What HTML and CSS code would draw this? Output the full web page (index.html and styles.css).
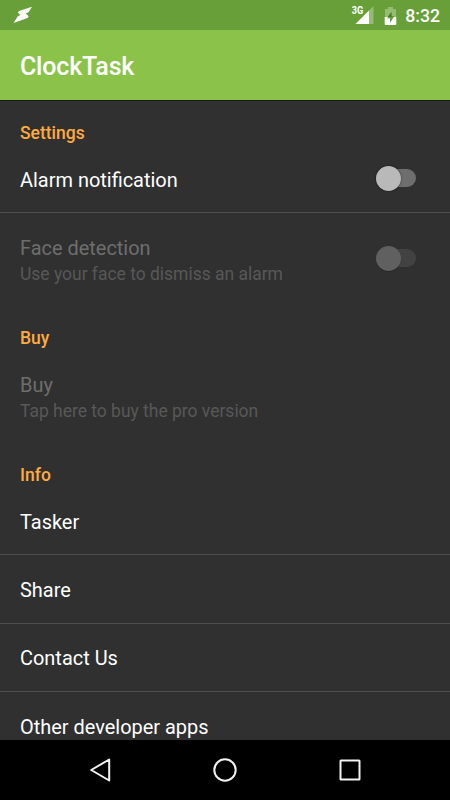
FILE: index.html
```html
<!DOCTYPE html>
<html lang="en">
<head>
<meta charset="utf-8">
<title>ClockTask</title>
<link rel="stylesheet" href="styles.css">
</head>
<body>
<div class="screen">
  <div class="status">
    <svg class="bolt" width="20" height="18" viewBox="0 0 20 18"><path d="M19 .7L6 5Q4.200 6 5.500 7.200L7.600 9 4.800 10.200.5 17 14.500 12Q16.500 11 15 9.600L12.700 7.500 15.500 6.300z" fill="#fff"/></svg>
    <svg class="signal" width="24" height="20" viewBox="0 0 24 20"><path d="M22.500 1v18H4.500z" fill="#fff" fill-opacity=".3"/><path d="M18 5.500V19H4.500z" fill="#fff"/><text x=".7" y="9" class="net" textLength="11.500" lengthAdjust="spacingAndGlyphs">3G</text></svg>
    <svg class="battery" width="13" height="19" viewBox="0 0 13 19"><path d="M4 1h5v2h3v8H1V3h3z" fill="#fff" fill-opacity=".3"/><path d="M.7 11h11.600v7q0 .9-.9.9H1.600Q.7 18.900.7 18z" fill="#fff"/><path d="M7.500 6L3 12.200h3v4.500l4.200-6.200H7.500z" fill="#689f38"/><path d="M7.500 6L3.700 11h6.100l.4-.5H7.500z" fill="#4c7b28"/></svg>
    <span class="time">8:32</span>
  </div>
  <header class="appbar"><h1>ClockTask</h1></header>
  <main class="list">
    <h2>Settings</h2>
    <div class="row ruled first"><span class="label">Alarm notification</span><span class="switch"><i class="thumb"></i></span></div>
    <div class="row double off"><div><div class="label">Face detection</div><div class="summary">Use your face to dismiss an alarm</div></div><span class="switch"><i class="thumb"></i></span></div>
    <h2>Buy</h2>
    <div class="row double off"><div><div class="label">Buy</div><div class="summary">Tap here to buy the pro version</div></div></div>
    <h2>Info</h2>
    <div class="row ruled first"><span class="label">Tasker</span></div>
    <div class="row ruled tall"><span class="label">Share</span></div>
    <div class="row ruled"><span class="label">Contact Us</span></div>
    <div class="row last"><span class="label">Other developer apps</span></div>
  </main>
  <nav class="nav">
    <svg width="26" height="26" viewBox="0 0 26 26"><path d="M22.200 2.500v21L4.200 13z"/></svg>
    <svg width="26" height="26" viewBox="0 0 26 26"><circle cx="13" cy="13" r="10.700"/></svg>
    <svg width="26" height="26" viewBox="0 0 26 26"><rect x="3.500" y="3.500" width="19" height="19" rx=".5"/></svg>
  </nav>
</div>
</body>
</html>
```
FILE: styles.css
```css
* { box-sizing: border-box; }
body { margin: 0; background: #303030; font-family: Roboto, sans-serif; }
.screen { width: 450px; height: 800px; display: flex; flex-direction: column; overflow: hidden; }
.status { flex: none; height: 30px; background: #689f38; display: flex; align-items: center; padding: 0 10px 0 13px; }
.bolt { margin-right: auto; }
.signal { margin-right: 9px; }
.net { font: 700 10.5px Roboto, sans-serif; fill: #fff; }
.battery { margin-right: 8px; }
.time { font-size: 17.7px; font-weight: 500; color: #fff; line-height: 30px; padding-top: 1px; }
.appbar { flex: none; height: 70px; background: #8bc34a; display: flex; align-items: center; padding: 4px 20px 0; }
h1 { margin: 0; font-size: 25px; font-weight: 500; color: #fff; line-height: 30px; letter-spacing: -.2px; }
.list { flex: 1; min-height: 0; overflow: hidden; background: #303030; box-shadow: inset 0 1px 0 #18181f; }
h2 { margin: 0; height: 45px; padding: 23px 20px 0; font-size: 17.5px; line-height: 21px; font-weight: 500; color: #ffab40; }
.row { height: 67px; padding: 0 34px 0 20px; display: flex; align-items: center; justify-content: space-between; }
.ruled { height: 68px; border-bottom: 1px solid #4d4d4d; padding-top: 1px; }
.first { padding-top: 3px; }
.tall { height: 69px; padding-top: 2px; }
.last { padding-top: 3px; }
.double { height: 92px; padding-top: 2px; }
.label { font-size: 19.95px; line-height: 24px; color: #fff; }
.summary { font-size: 17.5px; line-height: 21px; padding-top: 4px; height: 25px; letter-spacing: -.02px; }
.off .label { color: #6e6e6e; }
.off .summary { color: #585858; }
.switch { width: 40px; height: 18px; margin-bottom: 4px; border-radius: 9px; background: #6e6e6e; display: flex; align-items: center; }
.thumb { width: 25px; height: 25px; flex: none; border-radius: 50%; background: #b9b9b9; box-shadow: 0 0 2px rgba(0,0,0,.7); }
.off .switch { background: #424242; }
.off .thumb { background: #606060; box-shadow: 0 1px 1px rgba(0,0,0,.2); }
.nav { flex: none; height: 60px; background: #000; display: flex; align-items: center; justify-content: center; gap: 99px; }
.nav svg { fill: none; stroke: #f2f2f2; stroke-width: 2; stroke-linejoin: round; }
```
